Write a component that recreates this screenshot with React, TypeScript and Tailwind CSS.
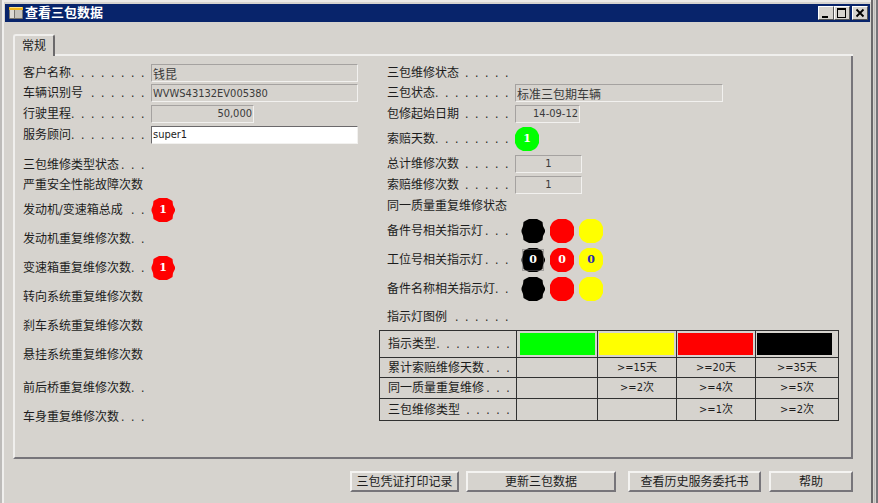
import { useState } from "react";
import type { ReactNode } from "react";

const sunken =
  "h-[18px] border border-t-[#a5a2a0] border-l-[#a5a2a0] border-r-[#f2f1ef] border-b-[#f2f1ef] bg-[#d6d3ce] px-px text-[#3a3a3a] outline-none";
const raised =
  "border-2 border-t-[#f4f3f1] border-l-[#f4f3f1] border-r-[#77757a] border-b-[#77757a] bg-[#d6d3ce]";
const caption =
  "h-3.5 w-4 border border-b-[#555] border-l-white border-r-[#555] border-t-white bg-[#d6d3ce]";

function Dots({ count }: { count: number }) {
  return (
    <span className="flex gap-1.5" aria-hidden="true">
      {Array.from({ length: count }, (_, i) => (
        <span key={i} className="w-1">.</span>
      ))}
    </span>
  );
}

type RowProps = {
  label: string;
  dots?: number;
  height?: string;
  htmlFor?: string;
  children?: ReactNode;
};

function Row({ label, dots = 0, height = "h-[29px]", htmlFor, children }: RowProps) {
  return (
    <div className={`flex items-center ${height}`}>
      <label htmlFor={htmlFor} className="flex w-32 flex-none justify-between whitespace-nowrap pr-1.5">
        <span>{label}</span>
        {dots > 0 && <Dots count={dots} />}
      </label>
      {children}
    </div>
  );
}

const lampColors = {
  red: "text-[#ff0000]",
  green: "text-[#00ff00]",
  yellow: "text-[#ffff00]",
  black: "text-black",
};

type LampProps = {
  color: keyof typeof lampColors;
  value?: string;
  focused?: boolean;
  notched?: boolean;
};

function Lamp({ color, value, focused, notched }: LampProps) {
  return (
    <span className={`grid size-6 flex-none place-items-center ${lampColors[color]}`}>
      <svg viewBox="0 0 24 24" className="col-start-1 row-start-1 size-6" fill="currentColor" aria-hidden="true">
        {notched ? (
          <path d="M8 0H16L19 1.500L21.500 3L22 7L24 11V13L22 17L21.500 21L19 22.500L16 24H8L5 22.500L2.500 21L2 17L0.500 13V11L2 7L2.500 3L5 1.500Z" />
        ) : (
          <path d="M8 0H16L20 2L22 4L24 8V16L22 20L20 22L16 24H8L4 22L2 20L0 16V8L2 4L4 2Z" />
        )}
        {focused && (
          <rect x="1.500" y="1.500" width="21" height="21" fill="none" stroke="#6b696b" strokeDasharray="1 1" />
        )}
      </svg>
      {value && (
        <span
          className={`col-start-1 row-start-1 font-[DejaVu_Serif,serif] text-[11px] font-bold ${
            color === "yellow" ? "text-[#2828b0]" : "text-white"
          }`}
        >
          {value}
        </span>
      )}
    </span>
  );
}

const legend = [
  { label: "累计索赔维修天数", dots: 3, height: "h-5", values: ["", ">=15天", ">=20天", ">=35天"] },
  { label: "同一质量重复维修", dots: 3, height: "h-[21px]", values: ["", ">=2次", ">=4次", ">=5次"] },
  { label: "三包维修类型", dots: 5, height: "h-[22px]", values: ["", "", ">=1次", ">=2次"] },
];

const swatches = ["bg-[#00ff00]", "bg-[#ffff00]", "bg-[#ff0000]", "bg-black"];

function LegendHeading({ label, dots }: { label: string; dots: number }) {
  return (
    <th scope="row" className="font-normal">
      <div className="flex justify-between whitespace-nowrap pl-2 pr-1.5">
        <span>{label}</span>
        <Dots count={dots} />
      </div>
    </th>
  );
}

export default function App() {
  const [advisor, setAdvisor] = useState("super1");
  return (
    <div className="flex min-h-screen border-l-2 border-l-[#bdbbb9] bg-[#d6d3ce] font-[DejaVu_Sans_Condensed,Noto_Sans_CJK_SC,sans-serif] text-[12px] leading-4 text-[#1c1c1c]">
      <div className="flex flex-1 flex-col border-l-2 border-t-2 border-l-[#f0efed] border-t-[#eceae7]">
        <header className="mx-px mt-0.5 flex h-[18px] items-center bg-[#08246b] pl-1 pr-0.5 text-white">
          <svg className="mr-0.5 size-3.5" viewBox="0 0 14 14" aria-hidden="true">
            <rect x="0" y="1" width="14" height="12" rx="1" fill="#77756f" />
            <rect x="1" y="4" width="4" height="8" fill="#dcdad3" />
            <rect x="6" y="4" width="7" height="8" fill="#c5c3bb" />
            <rect x="0" y="1" width="14" height="3" fill="#f1b51c" />
            <rect x="1" y="1" width="12" height="1" fill="#ffe58a" />
          </svg>
          <h1 className="flex-1 text-[13px] font-bold">查看三包数据</h1>
          <button aria-label="最小化" className={caption}>
            <svg viewBox="0 0 14 12" className="block h-3 w-3.5"><path d="M3 9h6v2H3z" /></svg>
          </button>
          <button aria-label="最大化" className={caption}>
            <svg viewBox="0 0 14 12" className="block h-3 w-3.5"><path d="M2 1h9v10H2zM3 3v7h7V3z" fillRule="evenodd" /></svg>
          </button>
          <button aria-label="关闭" className={`ml-0.5 ${caption}`}>
            <svg viewBox="0 0 14 12" className="block h-3 w-3.5"><path d="M3.500 2.500l7 7M10.500 2.500l-7 7" stroke="#000" strokeWidth="1.800" /></svg>
          </button>
        </header>

        <main className="flex flex-1 flex-col pl-[9px] pr-[18px] pt-3">
          <div className="flex items-end" role="tablist">
            <button
              role="tab"
              aria-selected="true"
              className="h-[22px] w-[42px] rounded-t-[3px] border-2 border-b-0 border-l-[#f0efed] border-r-[#6b696b] border-t-[#f0efed] text-center"
            >
              常规
            </button>
            <div className="h-0.5 flex-1 bg-[#f0efed]" />
          </div>

          <section className="flex border-b-2 border-l-2 border-r-2 border-b-[#77757a] border-l-[#f0efed] border-r-[#77757a] pb-[26px] pl-2 pr-3 pt-[7px]">
            <div className="flex-1">
              <Row label="客户名称" dots={8} height="h-5" htmlFor="customer">
                <input id="customer" readOnly value="钱昆" className={`w-[207px] ${sunken}`} />
              </Row>
              <Row label="车辆识别号" dots={6} height="h-5" htmlFor="vin">
                <input id="vin" readOnly value="WVWS43132EV005380" className={`w-[207px] text-[11px] ${sunken}`} />
              </Row>
              <Row label="行驶里程" dots={8} height="h-[21px]" htmlFor="mileage">
                <input id="mileage" readOnly value="50,000" className={`w-[103px] text-right text-[11px] ${sunken}`} />
              </Row>
              <Row label="服务顾问" dots={8} height="h-[21px]" htmlFor="advisor">
                <input
                  id="advisor"
                  value={advisor}
                  onChange={(e) => setAdvisor(e.target.value)}
                  className="h-[18px] w-[207px] border border-b-[#f2f1ef] border-l-[#6b696b] border-r-[#f2f1ef] border-t-[#6b696b] bg-white px-px text-[11px] outline-none"
                />
              </Row>
              <div className="pt-[9px]">
                <Row label="三包维修类型状态" dots={3} height="h-[21px]" />
                <Row label="严重安全性能故障次数" height="h-5" />
                <Row label="发动机/变速箱总成" dots={2}><Lamp color="red" value="1" notched /></Row>
                <Row label="发动机重复维修次数" dots={2} />
                <Row label="变速箱重复维修次数" dots={2}><Lamp color="red" value="1" notched /></Row>
                <Row label="转向系统重复维修次数" />
                <Row label="刹车系统重复维修次数" />
                <Row label="悬挂系统重复维修次数" />
              </div>
              <div className="pt-1">
                <Row label="前后桥重复维修次数" dots={2} />
                <Row label="车身重复维修次数" dots={3} />
              </div>
            </div>

            <div className="w-[460px] flex-none">
              <div className="pl-2">
                <Row label="三包维修状态" dots={5} height="h-5" />
                <Row label="三包状态" dots={8} height="h-5" htmlFor="status">
                  <input id="status" readOnly value="标准三包期车辆" className={`w-[208px] ${sunken}`} />
                </Row>
                <Row label="包修起始日期" dots={5} height="h-[21px]" htmlFor="start">
                  <input id="start" readOnly value="14-09-12" className={`w-[65px] text-right text-[11px] ${sunken}`} />
                </Row>
                <Row label="索赔天数" dots={8}><Lamp color="green" value="1" /></Row>
                <Row label="总计维修次数" dots={5} height="h-[21px]" htmlFor="total">
                  <input id="total" readOnly value="1" className={`w-[67px] text-center text-[11px] ${sunken}`} />
                </Row>
                <Row label="索赔维修次数" dots={5} height="h-[21px]" htmlFor="claims">
                  <input id="claims" readOnly value="1" className={`w-[67px] text-center text-[11px] ${sunken}`} />
                </Row>
                <Row label="同一质量重复维修状态" height="h-[21px]" />
                <Row label="备件号相关指示灯" dots={3}>
                  <div className="flex gap-[5px] pl-1.5">
                    <Lamp color="black" notched />
                    <Lamp color="red" />
                    <Lamp color="yellow" />
                  </div>
                </Row>
                <Row label="工位号相关指示灯" dots={3}>
                  <div className="flex gap-[5px] pl-1.5">
                    <Lamp color="black" value="0" notched focused />
                    <Lamp color="red" value="0" />
                    <Lamp color="yellow" value="0" />
                  </div>
                </Row>
                <Row label="备件名称相关指示灯" dots={2}>
                  <div className="flex gap-[5px] pl-1.5">
                    <Lamp color="black" notched />
                    <Lamp color="red" />
                    <Lamp color="yellow" />
                  </div>
                </Row>
                <Row label="指示灯图例" dots={6} height="h-[27px]" />
              </div>

              <table className="w-full table-fixed border-collapse [&_td]:border [&_td]:border-[#303030] [&_td]:p-0 [&_th]:border [&_th]:border-[#303030] [&_th]:p-0">
                <colgroup>
                  <col className="w-[137px]" />
                  <col className="w-[81px]" />
                  <col className="w-[79px]" />
                  <col className="w-[79px]" />
                  <col />
                </colgroup>
                <tbody>
                  <tr className="h-[27px]">
                    <LegendHeading label="指示类型" dots={8} />
                    {swatches.map((color, i) => (
                      <td key={color}>
                        <div className={`h-[22px] w-[75px] ${i === 0 ? "ml-[3px]" : "ml-px"} ${color}`} />
                      </td>
                    ))}
                  </tr>
                  {legend.map((row) => (
                    <tr key={row.label} className={row.height}>
                      <LegendHeading label={row.label} dots={row.dots} />
                      {row.values.map((value, i) => (
                        <td key={i} className="text-center text-[11px]">{value}</td>
                      ))}
                    </tr>
                  ))}
                </tbody>
              </table>
            </div>
          </section>

          <footer className="flex justify-end pt-3">
            <button className={`mr-[7px] h-[21px] w-[109px] leading-4 ${raised}`}>三包凭证打印记录</button>
            <button className={`mr-3 h-[21px] w-[150px] leading-4 ${raised}`}>更新三包数据</button>
            <button className={`mr-2 h-[21px] w-[133px] leading-4 ${raised}`}>查看历史服务委托书</button>
            <button className={`h-[21px] w-[84px] leading-4 ${raised}`}>帮助</button>
          </footer>
        </main>
      </div>
      <div className="flex w-[7px] gap-px">
        <div className="w-0.5 bg-[#6b696b]" />
        <div className="w-px bg-[#bdbbb9]" />
        <div className="w-0.5 bg-[#77757a]" />
      </div>
    </div>
  );
}
